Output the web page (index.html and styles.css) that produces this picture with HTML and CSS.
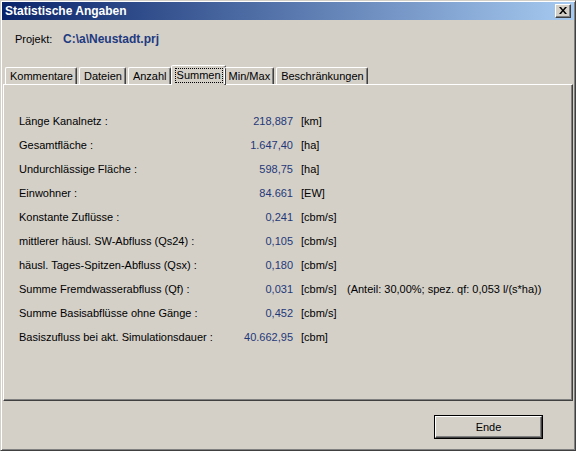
FILE: index.html
```html
<!DOCTYPE html>
<html>
<head>
<meta charset="utf-8">
<link rel="stylesheet" href="styles.css">
</head>
<body>
<div class="window">
  <div class="titlebar">
    <span class="title">Statistische Angaben</span>
    <span class="close">
      <svg width="8" height="7" viewBox="0 0 8 7"><path d="M0 0h2l2 2.5L6 0h2L5 3.5 8 7H6L4 4.5 2 7H0l3-3.5z" fill="#000"/></svg>
    </span>
  </div>
  <div class="project">
    <span class="plabel">Projekt:</span>
    <span class="pvalue">C:\a\Neustadt.prj</span>
  </div>
  <div class="tabs">
    <div class="tab first">Kommentare</div>
    <div class="tab">Dateien</div>
    <div class="tab">Anzahl</div>
    <div class="tab active"><span class="focus">Summen</span></div>
    <div class="tab">Min/Max</div>
    <div class="tab">Beschränkungen</div>
  </div>
  <div class="panel">
    <div class="grid">
      <div class="lbl">Länge Kanalnetz :</div><div class="val">218,887</div><div class="unit">[km]</div><div class="note"></div>
      <div class="lbl">Gesamtfläche :</div><div class="val">1.647,40</div><div class="unit">[ha]</div><div class="note"></div>
      <div class="lbl">Undurchlässige Fläche :</div><div class="val">598,75</div><div class="unit">[ha]</div><div class="note"></div>
      <div class="lbl">Einwohner :</div><div class="val">84.661</div><div class="unit">[EW]</div><div class="note"></div>
      <div class="lbl">Konstante Zuflüsse :</div><div class="val">0,241</div><div class="unit">[cbm/s]</div><div class="note"></div>
      <div class="lbl">mittlerer häusl. SW-Abfluss (Qs24) :</div><div class="val">0,105</div><div class="unit">[cbm/s]</div><div class="note"></div>
      <div class="lbl">häusl. Tages-Spitzen-Abfluss (Qsx) :</div><div class="val">0,180</div><div class="unit">[cbm/s]</div><div class="note"></div>
      <div class="lbl">Summe Fremdwasserabfluss (Qf) :</div><div class="val">0,031</div><div class="unit">[cbm/s]</div><div class="note">(Anteil: 30,00%; spez. qf: 0,053 l/(s*ha))</div>
      <div class="lbl">Summe Basisabflüsse ohne Gänge :</div><div class="val">0,452</div><div class="unit">[cbm/s]</div><div class="note"></div>
      <div class="lbl">Basiszufluss bei akt. Simulationsdauer :</div><div class="val">40.662,95</div><div class="unit">[cbm]</div><div class="note"></div>
    </div>
  </div>
  <div class="footer">
    <div class="button"><span>Ende</span></div>
  </div>
</div>
</body>
</html>
```
FILE: styles.css
```css
html, body {
  margin: 0;
  padding: 0;
  background: #D4D0C8;
}
body {
  width: 576px;
  height: 451px;
  overflow: hidden;
  font-family: "Liberation Sans", Arial, sans-serif;
  font-size: 11px;
  color: #000;
}
.window {
  box-sizing: border-box;
  width: 576px;
  height: 451px;
  background: #D4D0C8;
  border-style: solid;
  border-width: 1px;
  border-color: #D4D0C8 #404040 #404040 #D4D0C8;
  box-shadow: inset 1px 1px 0 #FFFFFF, inset -1px -1px 0 #808080;
  padding: 1px;
  display: flex;
  flex-direction: column;
}
.titlebar {
  height: 18px;
  background: linear-gradient(to right, #0A246A, #A6CAF0);
  display: flex;
  align-items: center;
  justify-content: space-between;
  padding: 0 3px 0 3px;
}
.title {
  color: #FFFFFF;
  font-weight: bold;
  font-size: 12px;
}
.close {
  box-sizing: border-box;
  width: 16px;
  height: 14px;
  background: #D4D0C8;
  border-style: solid;
  border-width: 1px;
  border-color: #FFFFFF #404040 #404040 #FFFFFF;
  box-shadow: inset -1px -1px 0 #808080;
  display: flex;
  align-items: center;
  justify-content: center;
  padding-bottom: 1px;
}
.project {
  height: 20px;
  margin-top: 9px;
  padding-left: 13px;
  display: flex;
  align-items: center;
}
.plabel {
  width: 48px;
}
.pvalue {
  font-weight: bold;
  font-size: 12px;
  color: #1E3A80;
}
.tabs {
  margin-top: 16px;
  height: 19px;
  padding-left: 3px;
  display: flex;
  align-items: flex-end;
  position: relative;
  z-index: 1;
}
.tab {
  box-sizing: border-box;
  height: 17px;
  padding: 1px 3px 0 4px;
  margin-right: 2px;
  display: flex;
  align-items: center;
  border-style: solid;
  border-width: 1px 1px 0 1px;
  border-color: #FFFFFF #404040 transparent #FFFFFF;
  box-shadow: inset -1px 0 0 #808080;
  border-radius: 2px 2px 0 0;
  font-size: 11px;
  line-height: 13px;
}
.tab.active {
  height: 20px;
  margin: 0 0 -1px -2px;
  padding: 0 3px 0 4px;
  background: #D4D0C8;
}
.tab.active + .tab {
  margin-left: -2px;
}
.focus {
  outline: 1px dotted #000;
  outline-offset: 0;
  padding: 0 1px;
}
.panel {
  box-sizing: border-box;
  height: 317px;
  margin: 0 1px 0 1px;
  border-style: solid;
  border-width: 1px;
  border-color: #FFFFFF #404040 #404040 #FFFFFF;
  box-shadow: inset -1px -1px 0 #808080;
  padding: 24px 0 0 15px;
}
.grid {
  display: grid;
  grid-template-columns: 210px 64px 54px auto;
  grid-auto-rows: 24px;
  align-items: center;
}
.val {
  text-align: right;
  color: #1F3878;
}
.unit {
  padding-left: 8px;
}
.note {
  white-space: nowrap;
}
.footer {
  flex: 1;
  display: flex;
  justify-content: flex-end;
  align-items: flex-start;
  padding: 14px 31px 0 0;
}
.button {
  box-sizing: border-box;
  width: 109px;
  height: 24px;
  border: 1px solid #000;
  display: flex;
}
.button span {
  flex: 1;
  display: flex;
  align-items: center;
  justify-content: center;
  border-style: solid;
  border-width: 1px;
  border-color: #FFFFFF #404040 #404040 #FFFFFF;
  box-shadow: inset -1px -1px 0 #808080;
  font-size: 11px;
}
```
